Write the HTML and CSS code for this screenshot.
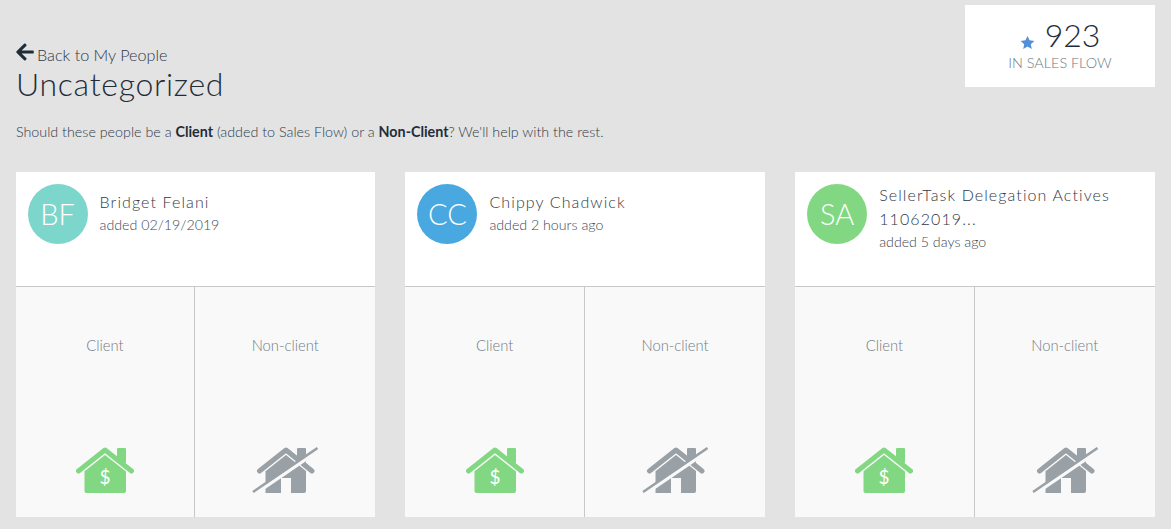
FILE: index.html
```html
<!DOCTYPE html>
<html lang="en">
<head>
  <meta charset="UTF-8">
  <title>Uncategorized</title>
  <link rel="stylesheet" href="styles.css">
</head>
<body>

<div class="page">
  <div class="top">
    <div class="heading">
      <a class="back" href="#">
        <svg class="back-arrow" viewBox="0 0 448 512"><path d="M257.500 445.100l-22.200 22.200c-9.400 9.400-24.600 9.400-33.900 0L7 273c-9.400-9.400-9.400-24.600 0-33.900L201.400 44.700c9.400-9.400 24.600-9.400 33.900 0l22.200 22.200c9.500 9.500 9.300 25-.4 34.300L136.600 216H424c13.300 0 24 10.700 24 24v32c0 13.300-10.700 24-24 24H136.600l120.500 114.800c9.800 9.300 10 24.800.4 34.300z"/></svg>
        Back to My People
      </a>
      <h1>Uncategorized</h1>
    </div>
    <div class="stat">
      <div class="stat-count">
        <svg class="star" viewBox="0 0 24 24"><path d="M12 1.500 L15.300 8.500 L23 9.500 L17.300 14.700 L18.800 22.300 L12 18.500 L5.200 22.300 L6.700 14.700 L1 9.500 L8.700 8.500 Z"/></svg>
        <span>923</span>
      </div>
      <div class="stat-label">IN SALES FLOW</div>
    </div>
  </div>

  <p class="intro">Should these people be a <b>Client</b> (added to Sales Flow) or a <b>Non-Client</b>? We'll help with the rest.</p>

  <div class="cards">
    <div class="card">
      <div class="person">
        <div class="avatar teal">BF</div>
        <div class="person-info">
          <div class="name">Bridget Felani</div>
          <div class="added">added 02/19/2019</div>
        </div>
      </div>
      <div class="choices">
        <div class="choice">
          <div class="choice-label">Client</div>
          <svg class="house" viewBox="0 0 58 46">
            <rect x="41" y="1" width="9" height="15" rx="1"/>
            <path class="roof" d="M2.500 24 L29 3 L55.500 24"/>
            <path d="M8.500 24.200 L29 8 L50 24.500 V44 a2 2 0 0 1 -2 2 H10.500 a2 2 0 0 1 -2 -2 Z"/>
            <text class="dollar" x="29" y="37" text-anchor="middle">$</text>
          </svg>
        </div>
        <div class="choice">
          <div class="choice-label blue-grey">Non-client</div>
          <svg class="house-off" viewBox="0 0 66 46">
            <rect x="45" y="1" width="9" height="15" rx="1"/>
            <path class="roof" d="M7.500 24 L34 3 L60 24"/>
            <path d="M13.500 24.200 L34 8 L54 24 V44 a2 2 0 0 1 -2 2 H39 V31 H29 V46 H13.500 Z"/>
            <path class="slash-gap" d="M2 47.500 L66 4"/>
            <path class="slash" d="M1 45 L65.500 1"/>
          </svg>
        </div>
      </div>
    </div>

    <div class="card">
      <div class="person">
        <div class="avatar blue">CC</div>
        <div class="person-info">
          <div class="name">Chippy Chadwick</div>
          <div class="added">added 2 hours ago</div>
        </div>
      </div>
      <div class="choices">
        <div class="choice">
          <div class="choice-label">Client</div>
          <svg class="house" viewBox="0 0 58 46">
            <rect x="41" y="1" width="9" height="15" rx="1"/>
            <path class="roof" d="M2.500 24 L29 3 L55.500 24"/>
            <path d="M8.500 24.200 L29 8 L50 24.500 V44 a2 2 0 0 1 -2 2 H10.500 a2 2 0 0 1 -2 -2 Z"/>
            <text class="dollar" x="29" y="37" text-anchor="middle">$</text>
          </svg>
        </div>
        <div class="choice">
          <div class="choice-label blue-grey">Non-client</div>
          <svg class="house-off" viewBox="0 0 66 46">
            <rect x="45" y="1" width="9" height="15" rx="1"/>
            <path class="roof" d="M7.500 24 L34 3 L60 24"/>
            <path d="M13.500 24.200 L34 8 L54 24 V44 a2 2 0 0 1 -2 2 H39 V31 H29 V46 H13.500 Z"/>
            <path class="slash-gap" d="M2 47.500 L66 4"/>
            <path class="slash" d="M1 45 L65.500 1"/>
          </svg>
        </div>
      </div>
    </div>

    <div class="card">
      <div class="person">
        <div class="avatar lime">SA</div>
        <div class="person-info">
          <div class="name">SellerTask Delegation Actives 11062019...</div>
          <div class="added">added 5 days ago</div>
        </div>
      </div>
      <div class="choices">
        <div class="choice">
          <div class="choice-label">Client</div>
          <svg class="house" viewBox="0 0 58 46">
            <rect x="41" y="1" width="9" height="15" rx="1"/>
            <path class="roof" d="M2.500 24 L29 3 L55.500 24"/>
            <path d="M8.500 24.200 L29 8 L50 24.500 V44 a2 2 0 0 1 -2 2 H10.500 a2 2 0 0 1 -2 -2 Z"/>
            <text class="dollar" x="29" y="37" text-anchor="middle">$</text>
          </svg>
        </div>
        <div class="choice">
          <div class="choice-label blue-grey">Non-client</div>
          <svg class="house-off" viewBox="0 0 66 46">
            <rect x="45" y="1" width="9" height="15" rx="1"/>
            <path class="roof" d="M7.500 24 L34 3 L60 24"/>
            <path d="M13.500 24.200 L34 8 L54 24 V44 a2 2 0 0 1 -2 2 H39 V31 H29 V46 H13.500 Z"/>
            <path class="slash-gap" d="M2 47.500 L66 4"/>
            <path class="slash" d="M1 45 L65.500 1"/>
          </svg>
        </div>
      </div>
    </div>
  </div>
</div>

</body>
</html>
```

FILE: styles.css
```css
/* General Styling */
body {
  margin: 0;
  background-color: #e3e3e3;
  color: #2b3845;
  font-family: Lato, "Open Sans", sans-serif;
  font-weight: 300;
}

.page {
  padding: 5px 16px 12px;
}

.top {
  display: flex;
  justify-content: space-between;
  align-items: flex-start;
  height: 82px;
}

.heading {
  padding-top: 37px;
}

.back {
  display: flex;
  align-items: center;
  gap: 3px;
  height: 24px;
  color: #2b3845;
  font-size: 16.200px;
  text-decoration: none;
}

.back-arrow {
  width: 18px;
  height: 20px;
  margin-top: -5px;
  fill: #1f2d3a;
}

h1 {
  margin: 0;
  font-size: 32px;
  font-weight: 300;
  line-height: 36px;
  letter-spacing: 0.700px;
  color: #1f2d3a;
}

.stat {
  width: 190px;
  height: 82px;
  box-sizing: border-box;
  padding-top: 12px;
  background-color: #fff;
  text-align: center;
}

.stat-count {
  display: flex;
  justify-content: center;
  align-items: flex-end;
  gap: 10px;
  height: 36px;
  font-size: 32px;
  line-height: 36px;
  color: #1f2d3a;
}

.star {
  width: 15px;
  height: 15px;
  margin-bottom: 3px;
  fill: #5390d9;
}

.stat-label {
  font-size: 14.400px;
  line-height: 20px;
  color: #6e7880;
}

.intro {
  margin: 36px 0 0;
  height: 49px;
  font-size: 14.300px;
  line-height: 18px;
  color: #2f3a45;
}

.intro b {
  font-weight: 700;
  color: #1f2d3a;
}

/* Cards */
.cards {
  display: grid;
  grid-template-columns: repeat(3, 1fr);
  gap: 30px;
  margin-left: -0.4px;
}

.card {
  background-color: #fff;
}

.person {
  display: flex;
  align-items: flex-start;
  gap: 12px;
  height: 115px;
  box-sizing: border-box;
  padding: 12px;
  border-bottom: 1px solid #c8c8c8;
}

.avatar {
  flex: none;
  width: 60px;
  height: 60px;
  border-radius: 50%;
  color: #fff;
  font-size: 29px;
  line-height: 60px;
  text-align: center;
}

.teal { background-color: #7dd6cc; }
.blue { background-color: #4aa8e0; }
.lime { background-color: #82d882; }

.person-info {
  display: flex;
  flex-direction: column;
  justify-content: center;
  box-sizing: border-box;
  min-height: 62px;
  margin-top: -1px;
  padding-bottom: 2px;
}

.name {
  font-size: 16px;
  line-height: 24px;
  letter-spacing: 1.100px;
  color: #2f3a45;
}

.added {
  font-size: 14.200px;
  line-height: 22px;
  color: #3d4853;
}

.choices {
  display: grid;
  grid-template-columns: calc(50% - 1.400px) 1fr;
  height: 230px;
  background-color: #f9f9f9;
}

.choice {
  display: flex;
  flex-direction: column;
  align-items: center;
  justify-content: space-between;
  padding: 49px 0 24px;
}

.choice + .choice {
  border-left: 1px solid #c8c8c8;
}

.choice-label {
  font-size: 14.800px;
  line-height: 18px;
  color: #747a7e;
}

.blue-grey {
  color: #6f7d8b;
}

/* House icons */
.house {
  width: 58px;
  height: 46px;
  fill: #82d882;
}

.house-off {
  width: 66px;
  height: 46px;
  fill: #99a1a6;
}

.roof {
  fill: none;
  stroke-width: 5;
  stroke-linecap: round;
  stroke-linejoin: round;
}

.house .roof { stroke: #82d882; }
.house-off .roof { stroke: #99a1a6; }

.slash-gap {
  fill: none;
  stroke: #f9f9f9;
  stroke-width: 3.500;
}

.slash {
  fill: none;
  stroke: #99a1a6;
  stroke-width: 2.500;
}

.dollar {
  fill: #fff;
  font-family: Lato, sans-serif;
  font-size: 19px;
  font-weight: 400;
}
```
